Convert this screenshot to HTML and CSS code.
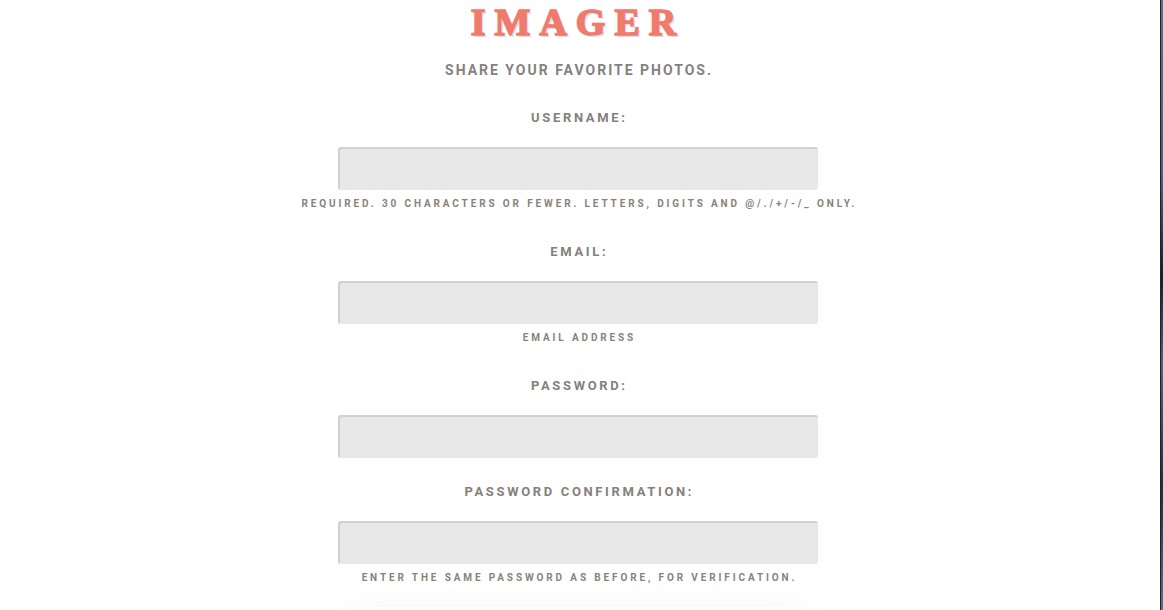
FILE: index.html
```html
<!DOCTYPE html>
<html>
<head>
<meta charset="utf-8">
<link rel="stylesheet" href="styles.css">
</head>
<body>
<div class="page">
  <main class="main">
    <h1 class="title">IMAGER</h1>
    <p class="tagline">SHARE YOUR FAVORITE PHOTOS.</p>
    <form class="form">
      <div class="field">
        <label class="label">USERNAME:</label>
        <input class="input" type="text">
        <span class="help">REQUIRED. 30 CHARACTERS OR FEWER. LETTERS, DIGITS AND @/./+/-/_ ONLY.</span>
      </div>
      <div class="field">
        <label class="label">EMAIL:</label>
        <input class="input" type="email">
        <span class="help">EMAIL ADDRESS</span>
      </div>
      <div class="field">
        <label class="label">PASSWORD:</label>
        <input class="input" type="password">
      </div>
      <div class="field">
        <label class="label">PASSWORD CONFIRMATION:</label>
        <input class="input" type="password">
        <span class="help">ENTER THE SAME PASSWORD AS BEFORE, FOR VERIFICATION.</span>
      </div>
      <div class="submit-area"></div>
    </form>
  </main>
  <div class="edge"></div>
</div>
</body>
</html>
```
FILE: styles.css
```css
html, body {
  margin: 0;
  padding: 0;
  background: #ffffff;
  height: 100%;
  overflow: hidden;
}
.page {
  display: flex;
  height: 610px;
  overflow: hidden;
}
.main {
  flex: 1;
  display: flex;
  flex-direction: column;
  align-items: center;
  padding-right: 4px;
  font-family: Roboto, "Liberation Sans", sans-serif;
}
.title {
  margin: 0;
  font-family: "Liberation Serif", serif;
  font-weight: 700;
  font-size: 38px;
  line-height: 44px;
  letter-spacing: 9px;
  color: #f07a6b;
  -webkit-text-stroke: 1.6px #f07a6b;
  text-shadow: 2px 2px 0 #d9dde6;
}
.tagline {
  margin: 16px 0 0;
  font-size: 14px;
  line-height: 20px;
  font-weight: 700;
  letter-spacing: 2px;
  margin-right: -2px;
  color: #85817d;
}
.form {
  margin-top: 29px;
  display: flex;
  flex-direction: column;
  align-items: center;
  gap: 25px;
}
.field {
  display: flex;
  flex-direction: column;
  align-items: center;
}
.label {
  font-size: 13px;
  line-height: 18px;
  font-weight: 700;
  letter-spacing: 2.65px;
  margin-right: -2.65px;
  color: #85807b;
  margin-bottom: 20px;
}
.input {
  box-sizing: border-box;
  width: 480px;
  height: 43px;
  border: none;
  border-radius: 3px;
  background: #e8e8e8;
  box-shadow: inset 2px 2px 0 #d1d1d1;
  outline: none;
}
.help {
  margin-top: 7px;
  margin-bottom: 7px;
  font-size: 10px;
  line-height: 14px;
  font-weight: 700;
  letter-spacing: 2.87px;
  margin-right: -2.87px;
  color: #8a8279;
}
.submit-area {
  width: 460px;
  height: 40px;
  margin-top: -10px;
  border-radius: 6px;
  background: #ffffff;
  box-shadow: 0 0 30px rgba(0, 0, 0, 0.035);
}
.edge {
  width: 3px;
  flex: none;
  border-left: 1px solid #222228;
  background: linear-gradient(180deg, #6b6b80 0%, #585872 30%, #1b1b2c 45%, #5e5e78 60%, #2a2a3c 80%, #6a6a80 100%);
  box-sizing: border-box;
}
```
